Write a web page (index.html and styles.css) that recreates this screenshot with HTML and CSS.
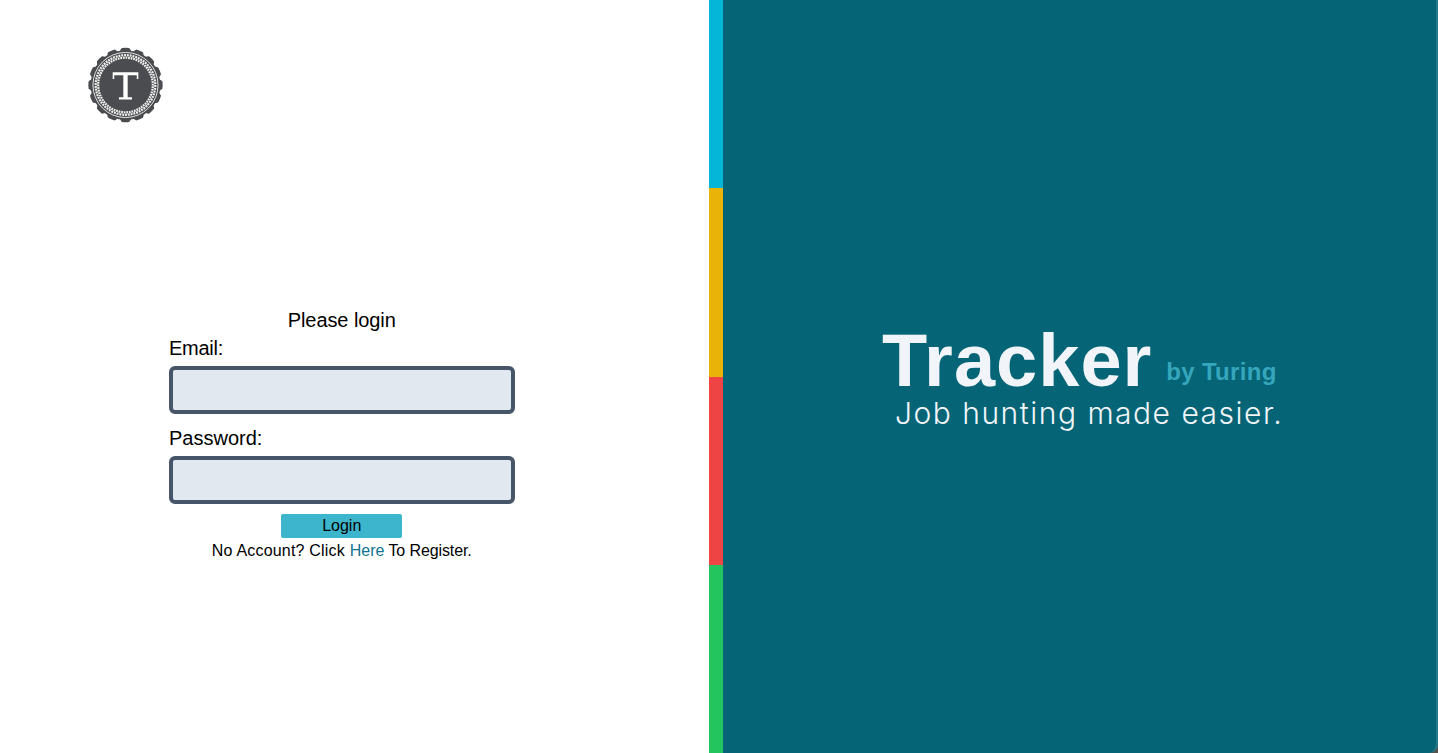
FILE: index.html
```html
<!DOCTYPE html>
<html lang="en">
<head>
<meta charset="utf-8">
<title>Tracker by Turing</title>
<link rel="stylesheet" href="styles.css">
</head>
<body>
<main class="page">
  <section class="login">
    <svg class="logo" viewBox="-38 -38 76 76" aria-label="Turing">
      <defs><path id="tooth" d="M-6.5-33Q-5-36-3.7-37.4Q0-37.9 3.7-37.4Q5-36 6.5-33ZM-6.5 33Q-5 36-3.7 37.4Q0 37.9 3.7 37.4Q5 36 6.5 33Z"/></defs>
      <g class="seal">
        <circle r="35.3"/>
        <use href="#tooth"/><use href="#tooth" transform="rotate(22.5)"/><use href="#tooth" transform="rotate(45)"/><use href="#tooth" transform="rotate(67.5)"/>
        <use href="#tooth" transform="rotate(90)"/><use href="#tooth" transform="rotate(112.5)"/><use href="#tooth" transform="rotate(135)"/><use href="#tooth" transform="rotate(157.5)"/>
      </g>
      <g class="rings">
        <circle r="33"/>
        <circle class="braid" r="30.2" pathLength="132"/>
        <circle class="braid shifted" r="27.7" pathLength="132"/>
      </g>
      <path class="mark" d="M-13-13H13V-6H11.4V-9.8H2.2V12.3H6.6V14.8H-6.6V12.3H-2.2V-9.8H-11.4V-6H-13Z"/>
    </svg>
    <form class="form">
      <h1 class="heading">Please login</h1>
      <label class="label email-label" for="email">Email:</label>
      <input class="field" id="email" type="email">
      <label class="label second" for="password">Password:</label>
      <input class="field" id="password" type="password">
      <button class="submit" type="button">Login</button>
      <p class="register"><span class="question">No Account? Click </span><a class="link" href="#">Here</a><span class="rest"> To Register.</span></p>
    </form>
  </section>
  <div class="stripes"><i class="cyan"></i><i class="yellow"></i><i class="red"></i><i class="green"></i></div>
  <section class="brand">
    <div class="title"><span class="name">Tracker</span><span class="by">by Turing</span></div>
    <p class="tagline">Job hunting made easier.</p>
  </section>
</main>
</body>
</html>
```
FILE: styles.css
```css
* { box-sizing: border-box; margin: 0; padding: 0; }
body { font-family: "Liberation Sans", Arial, sans-serif; color: #000; background: #fff; }
.page { display: flex; height: 753px; overflow: hidden; background: linear-gradient(#55544f, #55544f) right bottom / 10px 10px no-repeat; }
.login { width: 709px; padding: 47px 0 0 88px; }
.logo { display: block; width: 75px; height: 76px; }
.seal { fill: #4b4c4f; }
.rings { fill: none; stroke: #f5f5f5; stroke-width: .9; }
.rings .braid { stroke-width: 2.3; stroke-dasharray: 1.35 .65; stroke: #f0f0f0; }
.rings .shifted { stroke-dashoffset: 1; }
.mark { fill: #fff; }
.form { display: flex; flex-direction: column; width: 345.5px; margin: 183px 0 0 81px; }
.heading { align-self: center; font-size: 20px; line-height: 28px; font-weight: 400; letter-spacing: -.08px; }
.label { font-size: 20px; line-height: 28px; }
.email-label { letter-spacing: -.25px; }
.second { margin-top: 10px; }
.field { height: 48px; margin-top: 4px; border: 4px solid #475569; border-radius: 6px; background: #e2e8f0; outline: 0; }
.submit { align-self: center; width: 121px; height: 24px; margin-top: 10px; border: 0; border-radius: 2px; background: #3cb5cd; font: 16px/24px "Liberation Sans", Arial, sans-serif; color: #000; }
.register { align-self: center; font-size: 16px; line-height: 25px; white-space: nowrap; }
.question { letter-spacing: .2px; }
.rest { letter-spacing: -.1px; }
.link { color: #0e7490; text-decoration: none; }
.stripes { display: grid; grid-template-rows: repeat(4, 1fr); width: 14px; }
.cyan { background: #06b6d8; }
.yellow { background: #eab308; }
.red { background: #ef4444; }
.green { background: #22c55e; }
.brand { width: 715px; padding: 325px 0 0 159px; background: #056476; border-right: 2px solid #257989; border-bottom-right-radius: 9px; }
.title { display: flex; height: 72px; font-weight: 700; white-space: nowrap; }
.name { font-size: 74px; line-height: 72px; letter-spacing: 1px; color: #f1f5f9; }
.by { margin: 35px 0 0 14px; font-size: 24px; line-height: 24px; letter-spacing: .3px; color: #36a6bd; }
.tagline { margin: -2px 0 0 13px; font: 300 30px/36px Inter, "Liberation Sans", sans-serif; letter-spacing: 1.5px; color: #f1f5f9; white-space: nowrap; }
```
